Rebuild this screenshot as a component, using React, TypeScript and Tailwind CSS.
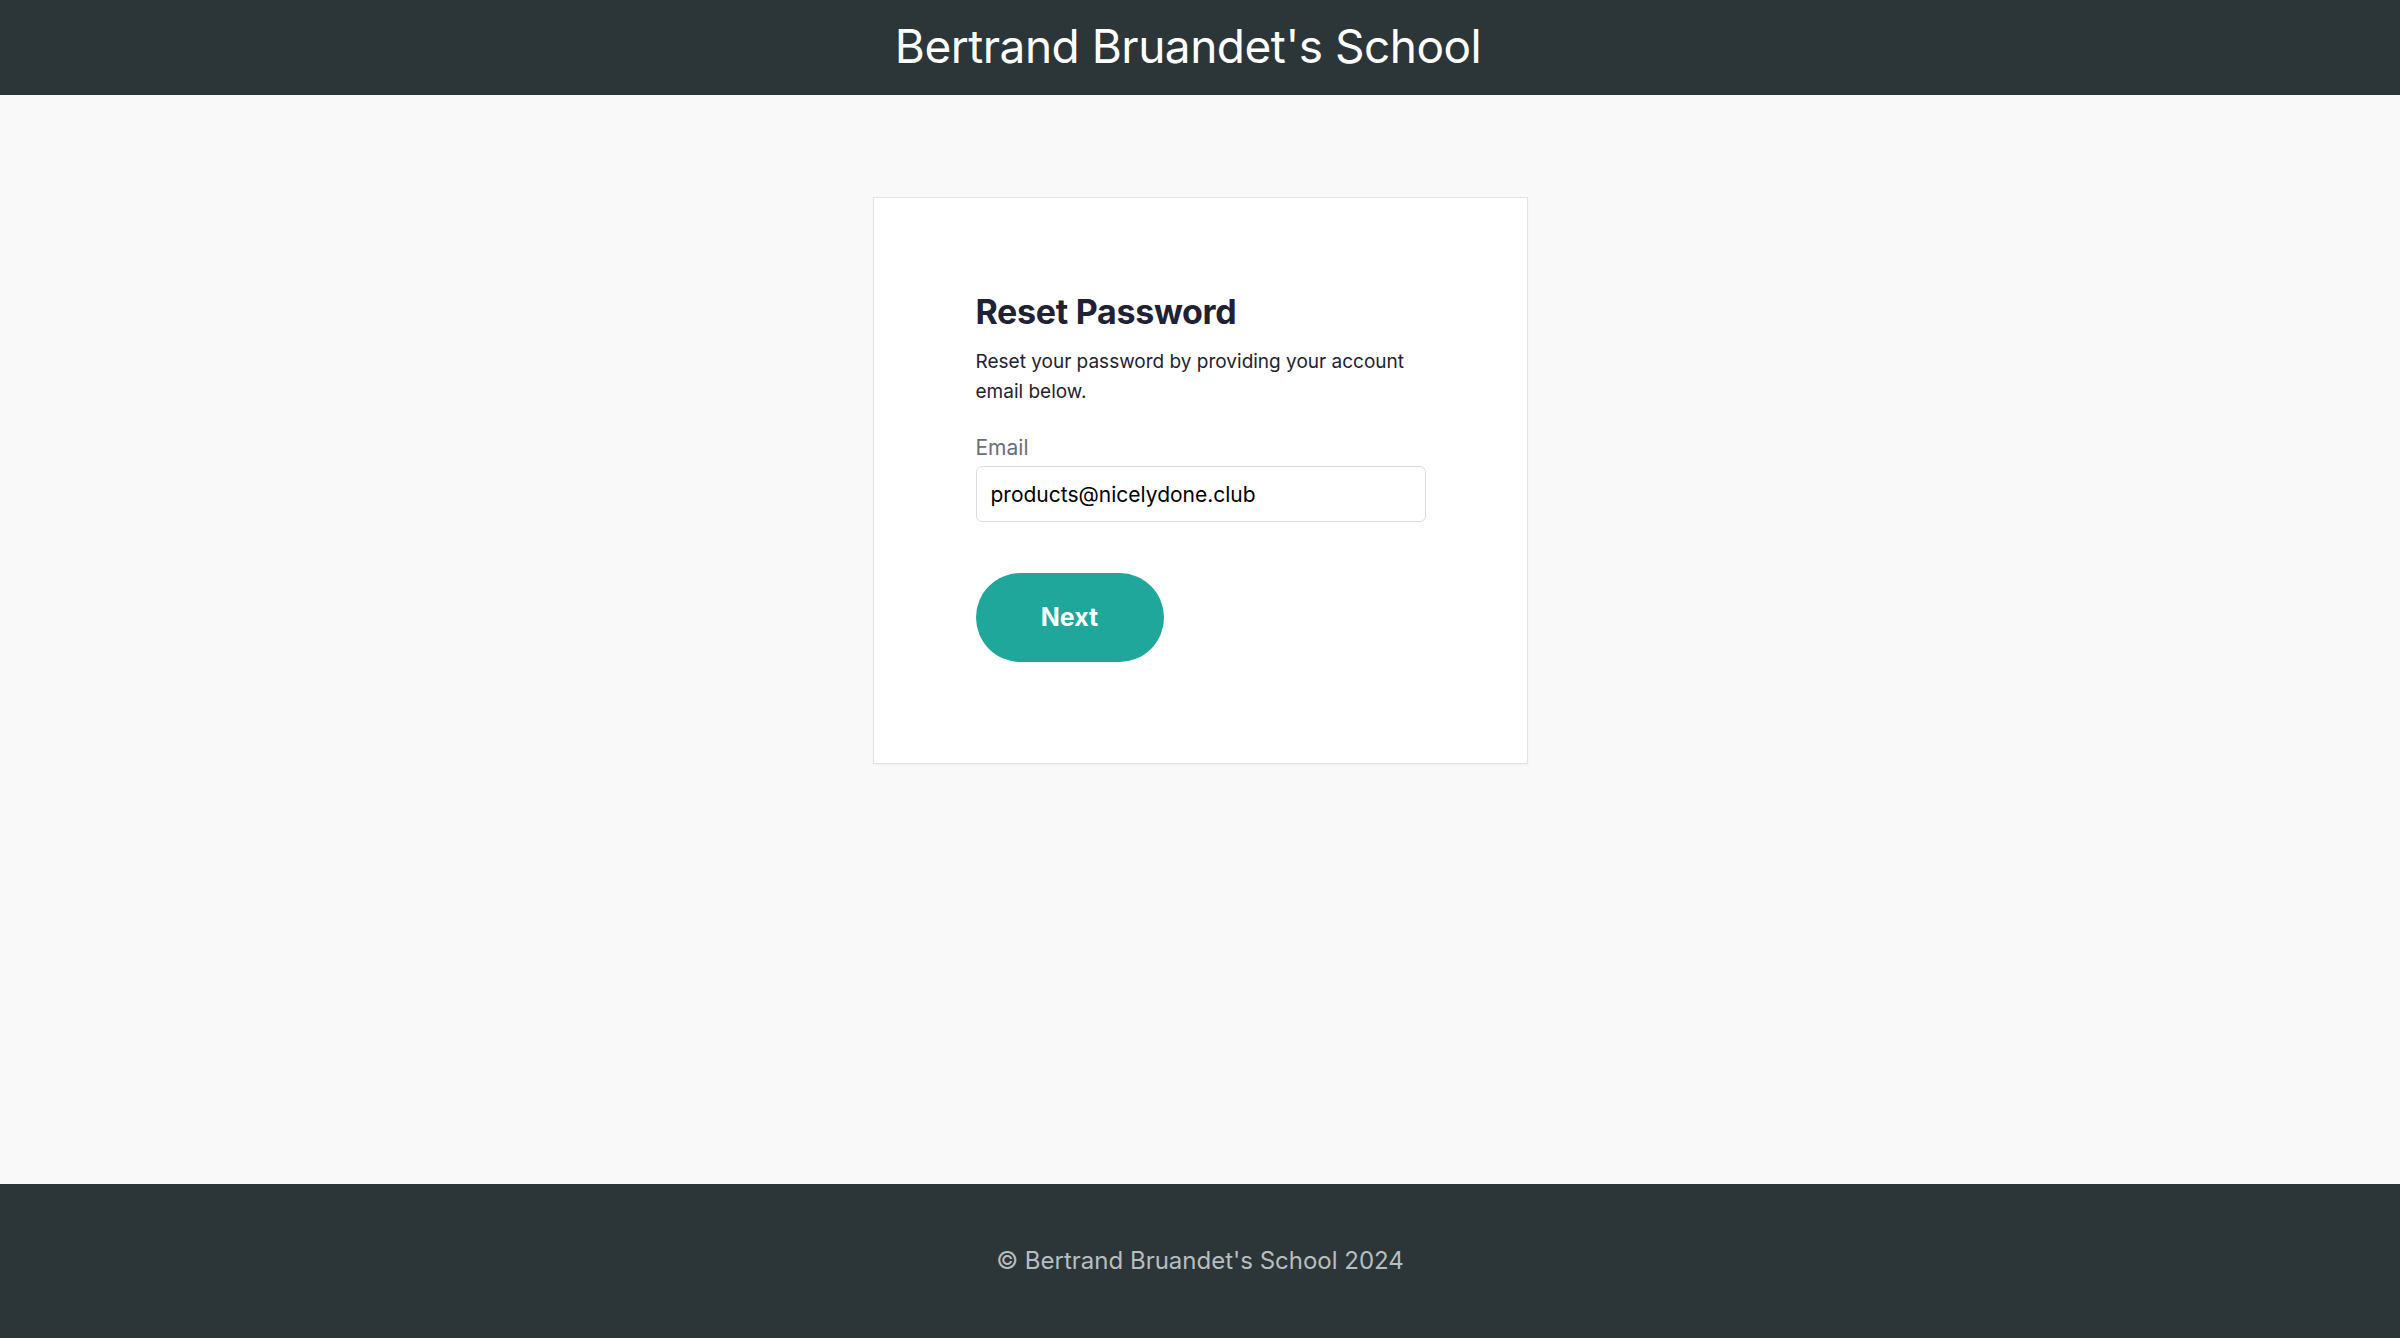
import { useState } from "react";

const SCHOOL = "Bertrand Bruandet's School";

export default function App() {
  const [email, setEmail] = useState("products@nicelydone.club");

  return (
    <div className="flex min-h-screen flex-col bg-[#f9f9f9] font-['Inter',sans-serif]">
      <header className="flex h-[95px] items-center justify-center bg-[#2c3638] pr-[24px] pb-[3px]">
        <h1 className="text-[46px] font-normal tracking-[-0.5px] text-white">{SCHOOL}</h1>
      </header>

      <main className="flex flex-1 justify-center pt-[102px]">
        <div className="h-[567px] w-[655px] border border-[#e3e3e6] bg-white px-[102px] pt-[92px] shadow-[0_1px_3px_rgba(0,0,0,0.04)]">
          <h2 className="text-[34px] font-bold leading-[44px] tracking-[-0.3px] text-[#1f2233]">
            Reset Password
          </h2>
          <p className="mt-[13px] text-[19px] leading-[30px] text-[#1f2233]">
            Reset your password by providing your account email below.
          </p>
          <label className="mt-[26px] mb-[3px] block text-[21px] leading-[30px] text-[#6b6e7b]">
            Email
          </label>
          <input
            value={email}
            onChange={(e) => setEmail(e.target.value)}
            className="block h-[56px] w-[450px] rounded-[6px] border border-[#dcdce0] px-[14px] text-[21px] text-black outline-none"
          />
          <button
            type="button"
            className="mt-[51px] h-[89px] w-[188px] rounded-full bg-[#1ea79a] text-[25px] font-bold text-white"
          >
            Next
          </button>
        </div>
      </main>

      <footer className="flex h-[154px] items-center justify-center bg-[#2c3638]">
        <p className="text-[24px] text-[#b9bdc0]">© {SCHOOL} 2024</p>
      </footer>
    </div>
  );
}
